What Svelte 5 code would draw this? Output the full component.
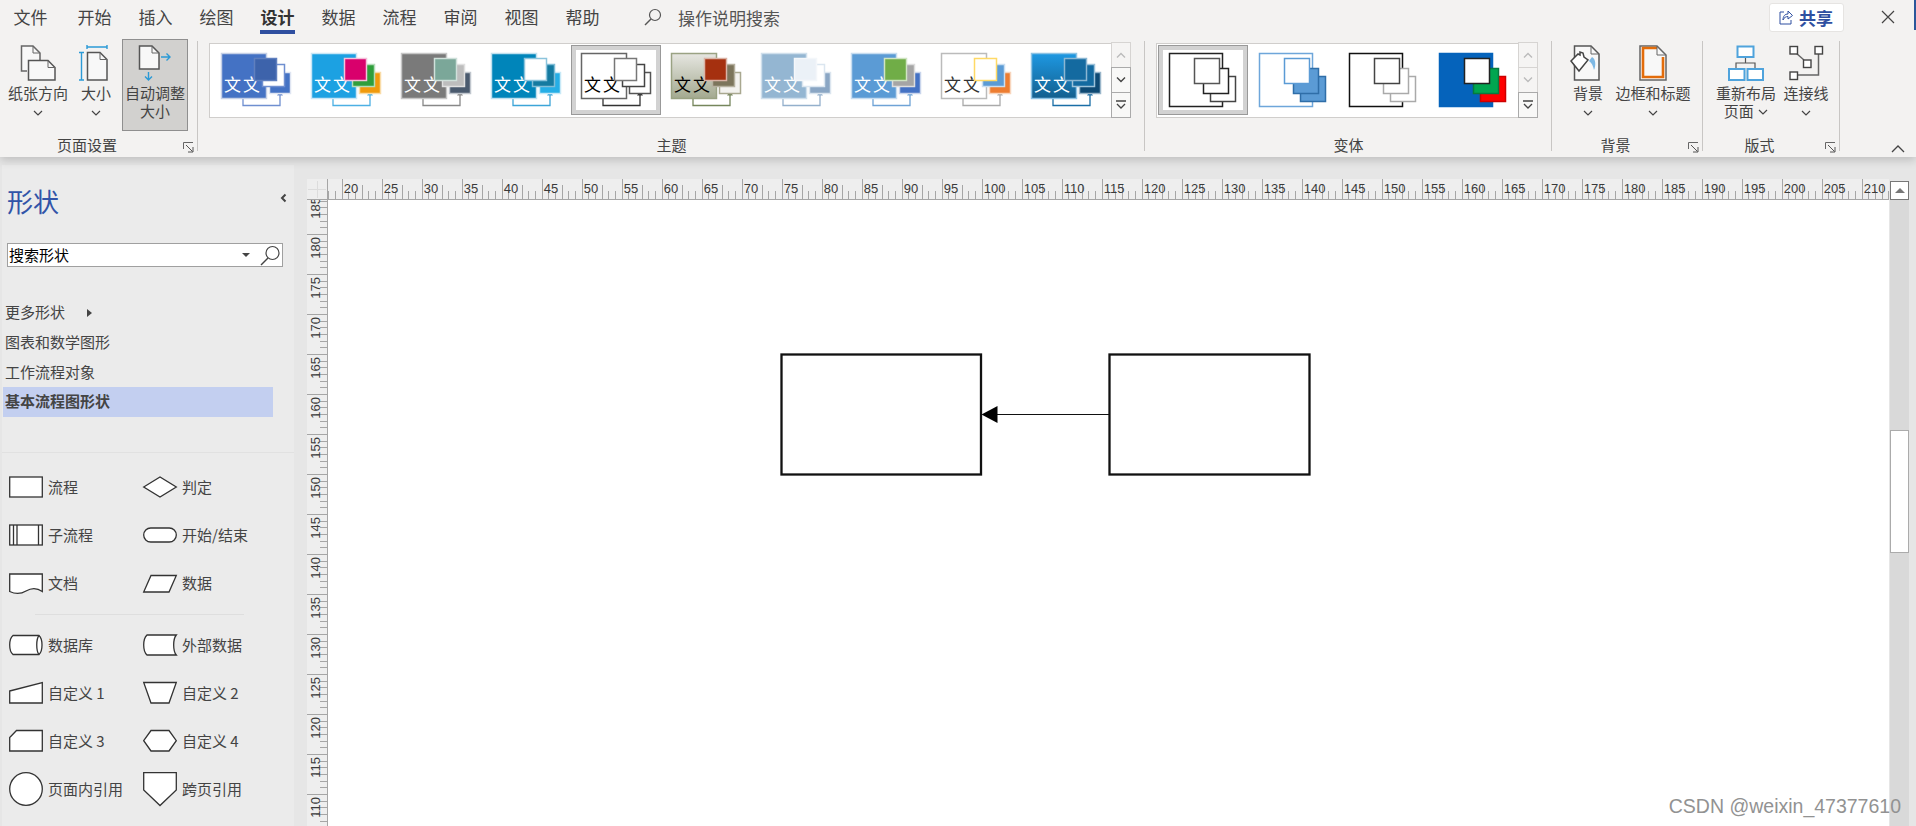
<script>
  const tabs = ['文件', '开始', '插入', '绘图', '设计', '数据', '流程', '审阅', '视图', '帮助'];

  const themes = [
    { main: ['#4472c4', '#c5d0e6'], back: ['#4472c4', '#dfe5f2'], mid: ['#fff', '#6f8fd0'], front: ['#3d63ab', '#5f7fbe'], conn: '#6f8fd0', text: '#fff' },
    { main: ['#1ca1e2', '#c8e6f6'], back: ['#f09a0d', '#f9dca8'], mid: ['#2f9e3c', '#b5dcba'], front: ['#d9006c', '#f4c0da'], conn: '#4cb0e4', text: '#fff' },
    { main: ['#7a7a7a', '#c6c6c6'], back: ['#4a5a6e', '#c0c6cd'], mid: ['#bdbdbd', '#e0e0e0'], front: ['#7ba799', '#cfe0da'], conn: '#888', text: '#fff' },
    { main: ['#0085ba', '#c0e0ee'], back: ['#25aee6', '#c8e9f7'], mid: ['#147aa0', '#7fbdd6'], front: ['#fff', '#8cc4dc'], conn: '#3ca5d8', text: '#fff' },
    { main: ['#fff', '#666'], back: ['#fff', '#555'], mid: ['#fff', '#444'], front: ['#fff', '#777'], conn: '#333', text: '#000' },
    { main: ['url(#sage)', '#9aa283'], back: ['#f3f2ef', '#a9a890'], mid: ['#7c755c', '#b5b09f'], front: ['#a5300f', '#d9b3a6'], conn: '#76865c', text: '#000' },
    { main: ['#94b6d2', '#cfdfec'], back: ['#8aa6c4', '#dbe5ef'], mid: ['#fff', '#dbe6f0'], front: ['#ebf1f7', '#f4f7fa'], conn: '#94b0cc', text: '#fff' },
    { main: ['#5b9bd5', '#c6dcf0'], back: ['#4472c4', '#c9d5ec'], mid: ['#a5a5a5', '#ddd'], front: ['#70ad47', '#cfe4c2'], conn: '#6fa3d6', text: '#fff' },
    { main: ['#fff', '#bbb'], back: ['#ed7d31', '#f8d5bd'], mid: ['#5b9bd5', '#c9def1'], front: ['#fff', '#ffd966'], conn: '#aaa', text: '#333' },
    { main: ['url(#ocean)', '#8cc2e4'], back: ['#0f4a74', '#9ab6ca'], mid: ['#146aa0', '#9cc1d9'], front: ['#146aa0', '#8bb6d2'], conn: '#1a6ea6', text: '#fff' }
  ];

  const variants = [
    { main: ['#fff', '#222'], back: ['#fff', '#444'], mid: ['#fff', '#222'], front: ['#fff', '#555'] },
    { main: ['#fff', '#6ea6da'], back: ['#5b9bd5', '#2f6ea8'], mid: ['#5b9bd5', '#2f6ea8'], front: ['#fff', '#5b9bd5'] },
    { main: ['#fff', '#111'], back: ['#fff', '#aaa'], mid: ['#fff', '#aaa'], front: ['#fff', '#444'] },
    { main: ['#0563bb', '#0563bb'], back: ['#ff0000', '#c00'], mid: ['#00a650', '#067a3e'], front: ['#fff', '#222'] }
  ];

  const menu = ['图表和数学图形', '工作流程对象'];

  const topTicks = [];
  for (let k = -2; k <= 233; k++) {
    const m = ((k % 6) + 6) % 6;
    topTicks.push({ x: Math.round(13.7 + (k * 40) / 6) + 0.5, len: m === 0 ? 20 : m === 3 ? 14 : 8 });
  }
  const topLabels = [];
  for (let v = 20; v <= 210; v += 5) topLabels.push({ v, x: 13.7 + (v - 20) * 8 + 2 });

  const sideTicks = [];
  for (let k = -6; k <= 95; k++) {
    const m = ((k % 6) + 6) % 6;
    sideTicks.push({ y: Math.round(34 + (k * 40) / 6) + 0.5, len: m === 0 ? 21 : m === 3 ? 12 : 8 });
  }
  const sideLabels = [];
  for (let v = 185; v >= 110; v -= 5) sideLabels.push({ v, y: 34 + (180 - v) * 8 + 3 });
</script>

{#snippet chevron()}
  <svg class="chev" width="10" height="6" viewBox="0 0 10 6"><path d="M1 1l4 4 4-4" fill="none" stroke="#444" stroke-width="1.2" /></svg>
{/snippet}

{#snippet launcher()}
  <svg class="launcher" width="11" height="11" viewBox="0 0 11 11">
    <path d="M.5 7V.5H10" fill="none" stroke="#666" />
    <path d="M3 3l6.5 6.5M10 5v5H5" fill="none" stroke="#555" />
  </svg>
{/snippet}

{#snippet stack(t, box, text)}
  <rect x={box.main[0]} y={box.main[1]} width={box.main[2]} height={box.main[2]} fill={t.main[0]} stroke={t.main[1]} stroke-width="1.5" />
  <rect x={box.back[0]} y={box.back[1]} width={box.back[2]} height={box.back[2]} fill={t.back[0]} stroke={t.back[1]} stroke-width="1.5" />
  <rect x={box.mid[0]} y={box.mid[1]} width={box.mid[2]} height={box.mid[2]} fill={t.mid[0]} stroke={t.mid[1]} stroke-width="1.5" />
  {#if text}
    <text x="13" y="46" class="thumb-text" fill={t.text}>文文</text>
  {/if}
  <rect x={box.front[0]} y={box.front[1]} width={box.front[2]} height={box.front[2]} fill={t.front[0]} stroke={t.front[1]} stroke-width="1.5" />
{/snippet}

<div class="app">
  <header class="ribbon">
    <nav class="tabs">
      {#each tabs as tab}
        <span class="tab" class:active={tab === '设计'}>{tab}</span>
      {/each}
      <svg class="tell-icon" width="18" height="18" viewBox="0 0 18 18">
        <circle cx="11" cy="7" r="5.5" fill="none" stroke="#555" stroke-width="1.2" />
        <path d="M7 11l-6 6" stroke="#555" stroke-width="1.4" />
      </svg>
      <span class="tell">操作说明搜索</span>
      <div class="share">
        <svg width="14" height="16" viewBox="0 0 14 16">
          <path d="M5 3H1v12h11v-4" fill="none" stroke="#2f4fa0" />
          <path d="M4 11c0-4 2-6 5-6V2l4.500 4.500L9 10V7.500c-2 0-4 1-5 3.500z" fill="none" stroke="#2f4fa0" />
        </svg>
        <b>共享</b>
      </div>
      <svg class="close" width="14" height="14" viewBox="0 0 14 14"><path d="M1 1l12 12M13 1L1 13" stroke="#444" stroke-width="1.2" /></svg>
      <span class="edge"></span>
    </nav>

    <div class="groups">
      <section class="group launched" style="width:198px">
        <div class="body">
          <div class="btn" style="width:76px">
            <svg class="icon" width="36" height="36" viewBox="0 0 36 36">
              <path d="M7 26H1.500V1H13l7 7v7" fill="#f8f8f8" stroke="#666" stroke-width="1.500" />
              <path d="M8.500 15.500H28l7 7V35H8.500z" fill="#f8f8f8" stroke="#555" stroke-width="1.500" />
              <path d="M13 1v7h7M28 15.500v7h7" fill="none" stroke="#666" />
            </svg>
            <span>纸张方向</span>
            {@render chevron()}
          </div>
          <div class="btn" style="width:40px">
            <svg class="icon" width="36" height="36" viewBox="0 0 36 36">
              <path d="M9.500 7.500H22l7 7V35H9.500z" fill="#f8f8f8" stroke="#555" stroke-width="1.500" />
              <path d="M22 7.500v7h7" fill="none" stroke="#666" />
              <path d="M9 2h20M9 0v4M29 0v4M3.500 7.500V35M1 7.500h5M1 35h5" fill="none" stroke="#2b9ad6" stroke-width="1.400" />
            </svg>
            <span>大小</span>
            {@render chevron()}
          </div>
          <div class="btn pressed">
            <svg class="icon" width="36" height="36" viewBox="0 0 36 36">
              <path d="M2.500 1H15l7 7v16H2.500z" fill="#f8f8f8" stroke="#555" stroke-width="1.500" />
              <path d="M15 1v7h7" fill="none" stroke="#666" />
              <path d="M24 12h9M29.500 8.500L33 12l-3.500 3.500M11.500 27v8M8 31.500l3.500 3.500 3.500-3.500" fill="none" stroke="#2b9ad6" stroke-width="1.400" />
            </svg>
            <span>自动调整</span>
            <span>大小</span>
          </div>
        </div>
        <div class="label">页面设置</div>
        {@render launcher()}
      </section>

      <section class="group" style="width:947px">
        <div class="body">
          <div class="gallery" style="width:922px">
            {#each themes as t, i}
              <div class="cell" class:selected={i === 4}>
                <svg width="88" height="68" viewBox="1 1 88 68">
                  <defs>
                    <linearGradient id="sage" x1="0" y1="0" x2="0" y2="1"><stop offset="0" stop-color="#e6e6e1" /><stop offset="1" stop-color="#a3a98f" /></linearGradient>
                    <linearGradient id="ocean" x1="0" y1="0" x2="0" y2="1"><stop offset="0" stop-color="#1e98e2" /><stop offset="1" stop-color="#135f8e" /></linearGradient>
                  </defs>
                  <path d="M32 54v6.500h37V50" fill="none" stroke={t.conn} stroke-width="1.300" />
                  <path d="M69 46l3 4.500h-6z" fill={t.conn} />
                  {@render stack(t, { main: [10.5, 8.5, 45], front: [43.5, 13.5, 22], mid: [51.5, 19.5, 22], back: [58.5, 27.5, 21] }, true)}
                </svg>
              </div>
            {/each}
            <div class="spin">
              <div class="off"><svg width="12" height="8" viewBox="0 0 12 8"><path d="M2 6.500l4-4 4 4" fill="none" stroke="#bbb" stroke-width="1.400" /></svg></div>
              <div><svg width="12" height="8" viewBox="0 0 12 8"><path d="M2 1.500l4 4 4-4" fill="none" stroke="#444" stroke-width="1.400" /></svg></div>
              <div><svg width="12" height="10" viewBox="0 0 12 10"><path d="M1 1h10M2 4l4 4 4-4" fill="none" stroke="#444" stroke-width="1.300" /></svg></div>
            </div>
          </div>
        </div>
        <div class="label">主题</div>
      </section>

      <section class="group" style="width:407px">
        <div class="body">
          <div class="gallery" style="width:381px">
            {#each variants as t, i}
              <div class="cell" class:selected={i === 0}>
                <svg width="88" height="68" viewBox="1 1 88 68">
                  {@render stack(t, { main: [11.5, 8.5, 53], front: [36.5, 13.5, 25], mid: [45.5, 23.5, 25], back: [52.5, 31.5, 25] }, false)}
                </svg>
              </div>
            {/each}
            <div class="spin">
              <div class="off"><svg width="12" height="8" viewBox="0 0 12 8"><path d="M2 6.500l4-4 4 4" fill="none" stroke="#bbb" stroke-width="1.400" /></svg></div>
              <div class="off"><svg width="12" height="8" viewBox="0 0 12 8"><path d="M2 1.500l4 4 4-4" fill="none" stroke="#bbb" stroke-width="1.400" /></svg></div>
              <div><svg width="12" height="10" viewBox="0 0 12 10"><path d="M1 1h10M2 4l4 4 4-4" fill="none" stroke="#444" stroke-width="1.300" /></svg></div>
            </div>
          </div>
        </div>
        <div class="label">变体</div>
      </section>

      <section class="group launched" style="width:151px">
        <div class="body inset-bg">
          <div class="btn" style="width:50px">
            <svg class="icon" width="36" height="36" viewBox="0 0 36 36">
              <path d="M4.500 1H21l8 8v26H4.500z" fill="#f8f8f8" stroke="#555" stroke-width="1.500" />
              <path d="M21 1v8h8" fill="none" stroke="#666" />
              <path d="M22 12c4 2 4 9 2 13-1-4-2-7-5-9z" fill="#7db8e4" />
              <path d="M1 16l7-7 2 1 0-3 3 1 1 4 4 3-9 11z" fill="#fff" stroke="#444" stroke-width="1.500" />
            </svg>
            <span>背景</span>
            {@render chevron()}
          </div>
          <div class="btn" style="width:80px">
            <svg class="icon" width="36" height="36" viewBox="0 0 36 36">
              <path d="M5 1h17l9 9v25H5z" fill="#f8f8f8" stroke="#666" stroke-width="1.500" />
              <path d="M22 3H8v29h20V12" fill="none" stroke="#e36c0a" stroke-width="2.600" />
              <path d="M22 1v9h9" fill="none" stroke="#666" />
            </svg>
            <span>边框和标题</span>
            {@render chevron()}
          </div>
        </div>
        <div class="label">背景</div>
        {@render launcher()}
      </section>

      <section class="group launched" style="width:137px">
        <div class="body layout-body">
          <div class="btn" style="width:60px">
            <svg class="icon" width="36" height="36" viewBox="0 0 36 36">
              <path d="M17.500 12v6M8 24v-6h19v6" fill="none" stroke="#555" stroke-width="1.200" />
              <rect x="9.500" y="1.500" width="16" height="10.500" fill="#fff" stroke="#4fa3dc" stroke-width="2" />
              <rect x="1" y="24" width="15.500" height="11" fill="#fff" stroke="#4fa3dc" stroke-width="2" />
              <rect x="19.500" y="24" width="15.500" height="11" fill="#fff" stroke="#4fa3dc" stroke-width="2" />
            </svg>
            <span>重新布局</span>
            <span class="with-chev">页面 {@render chevron()}</span>
          </div>
          <div class="btn" style="width:60px">
            <svg class="icon" width="36" height="36" viewBox="0 0 36 36">
              <path d="M8 8l8 7M30.500 9v21H9" fill="none" stroke="#666" stroke-width="1.500" />
              <rect x="2" y="1.500" width="7.500" height="7.500" fill="#fff" stroke="#444" stroke-width="1.400" />
              <rect x="15.500" y="15" width="7.500" height="7.500" fill="#fff" stroke="#444" stroke-width="1.400" />
              <rect x="27" y="1.500" width="7.500" height="7.500" fill="#fff" stroke="#444" stroke-width="1.400" />
              <rect x="2" y="27" width="7.500" height="7.500" fill="#fff" stroke="#444" stroke-width="1.400" />
            </svg>
            <span>连接线</span>
            {@render chevron()}
          </div>
        </div>
        <div class="label">版式</div>
        {@render launcher()}
      </section>

      <svg class="collapse" width="14" height="8" viewBox="0 0 14 8"><path d="M1 7l6-6 6 6" fill="none" stroke="#444" stroke-width="1.300" /></svg>
    </div>
  </header>

  <div class="workspace">
    <aside class="panel">
      <div class="panel-head">
        <h1>形状</h1>
        <svg width="7" height="10" viewBox="0 0 7 10"><path d="M5.500 1.500L2 5l3.500 3.500" fill="none" stroke="#444" stroke-width="2" /></svg>
      </div>
      <div class="search">
        <span>搜索形状</span>
        <i class="tri"></i>
        <svg width="21" height="21" viewBox="0 0 21 21">
          <circle cx="12.500" cy="8" r="6.500" fill="none" stroke="#444" stroke-width="1.200" />
          <path d="M8 13l-7 7" stroke="#444" stroke-width="1.400" />
        </svg>
      </div>
      <ul class="menu">
        <li>更多形状<i class="more"></i></li>
        {#each menu as item}
          <li>{item}</li>
        {/each}
        <li class="current">基本流程图形状</li>
      </ul>
      <div class="rule"></div>
      <div class="shapes">
        <div class="shape"><svg viewBox="0 0 34 40"><rect x=".7" y="10" width="32.600" height="20" /></svg>流程</div>
        <div class="shape"><svg viewBox="0 0 34 40"><path d="M.7 20L17 10l16.300 10L17 30z" /></svg>判定</div>
        <div class="shape"><svg viewBox="0 0 34 40"><rect x=".7" y="10" width="32.600" height="20" /><path d="M4.500 10v20M8 10v20M29.500 10v20" /></svg>子流程</div>
        <div class="shape"><svg viewBox="0 0 34 40"><rect x=".7" y="13" width="32.600" height="14" rx="7" /></svg>开始/结束</div>
        <div class="shape"><svg viewBox="0 0 34 40"><path d="M.7 11h32.600v17.500C27 24 22 25 17 28s-11 3-16.300.5z" /></svg>文档</div>
        <div class="shape"><svg viewBox="0 0 34 40"><path d="M.7 29L8 12.500h25.300L26 29z" /></svg>数据</div>
        <div class="divider"></div>
        <div class="shape"><svg viewBox="0 0 34 40"><path d="M4 10.500h26c4 3.500 4 15.500 0 19H4c-4.400-3.500-4.400-15.500 0-19z" /><path d="M30 10.500c-3 3.500-3 15.500 0 19" /></svg>数据库</div>
        <div class="shape"><svg viewBox="0 0 34 40"><path d="M4 10h29.300c-3.500 4-3.500 16 0 20H4C-.4 26-.4 14 4 10z" /></svg>外部数据</div>
        <div class="shape"><svg viewBox="0 0 34 40"><path d="M.7 18L33.300 9.500V30H.7z" /></svg>自定义 1</div>
        <div class="shape"><svg viewBox="0 0 34 40"><path d="M.7 9.500h32.600L26 30H8z" /></svg>自定义 2</div>
        <div class="shape"><svg viewBox="0 0 34 40"><path d="M7.500 9.500h25.800V30H.7V16.500z" /></svg>自定义 3</div>
        <div class="shape"><svg viewBox="0 0 34 40"><path d="M.7 19.700L8 9.500h18l7.300 10.200L26 30H8z" /></svg>自定义 4</div>
        <div class="shape"><svg viewBox="0 0 34 40"><circle cx="17" cy="20" r="16.300" /></svg>页面内引用</div>
        <div class="shape"><svg viewBox="0 0 34 40"><path d="M.7 3.700h32.600V21L17 36.500.7 21z" /></svg>跨页引用</div>
      </div>
    </aside>

    <main class="drawing">
      <svg class="corner" width="21" height="21" viewBox="0 0 21 21">
        <path d="M10.500 2v17M1 10.500h18" stroke="#dcdcdc" />
        <path d="M20.500 0v21M0 20.500h21" stroke="#a6a6a6" />
      </svg>
      <svg class="ruler-top" width="1561" height="21" viewBox="0 0 1561 21">
        {#each topTicks as t}
          <path d="M{t.x} {20 - t.len}v{t.len}" stroke="#a6a6a6" />
        {/each}
        <path d="M0 20.500h1561" stroke="#a6a6a6" />
        {#each topLabels as l}
          <text class="ruler-text" x={l.x} y="13.500">{l.v}</text>
        {/each}
      </svg>
      <div class="scroll-btn"><i></i></div>

      <svg class="ruler-side" width="21" height="626" viewBox="0 0 21 626">
        {#each sideTicks as t}
          <path d="M{21 - t.len} {t.y}h{t.len}" stroke="#a6a6a6" />
        {/each}
        <path d="M20.500 0v626" stroke="#a6a6a6" />
        {#each sideLabels as l}
          <text class="ruler-text" text-anchor="end" x="12.500" y={l.y} transform="rotate(-90 12.500 {l.y})">{l.v}</text>
        {/each}
      </svg>
      <svg class="canvas" width="1561" height="626" viewBox="0 0 1561 626">
        <rect x="453.500" y="154.500" width="199.500" height="120" fill="#fff" stroke="#111" stroke-width="2.300" />
        <rect x="781.500" y="154.500" width="200" height="120" fill="#fff" stroke="#111" stroke-width="2.300" />
        <path d="M669 214.500h112" stroke="#111" stroke-width="1.200" />
        <path d="M653.500 214.500l16-8.500v17z" fill="#000" />
      </svg>
      <div class="track"><div class="thumb"></div></div>
    </main>
  </div>
  <div class="mark">CSDN @weixin_47377610</div>
</div>

<style>
  :global(body) {
    margin: 0;
    background: #e6e6e6;
  }

  .app {
    position: relative;
    width: 1916px;
    height: 826px;
    overflow: hidden;
    background: #e6e6e6;
    color: #444;
    font-family: "Noto Sans CJK SC", "Noto Sans", sans-serif;
    font-size: 15px;
  }

  .ribbon {
    position: relative;
    z-index: 2;
    height: 157px;
    background: #f3f2f1;
    box-shadow: 0 3px 9px rgba(0, 0, 0, 0.18);
  }

  .tabs {
    display: flex;
    align-items: center;
    box-sizing: border-box;
    height: 38px;
    padding-bottom: 4px;
  }
  .tab {
    position: relative;
    width: 61px;
    text-align: center;
    font-size: 17px;
    line-height: 34px;
    color: #444;
  }
  .tab:first-child {
    width: 64px;
    padding-right: 3px;
    box-sizing: border-box;
  }
  .tab.active {
    font-weight: 700;
    color: #333;
  }
  .tab.active::after {
    content: "";
    position: absolute;
    left: 13px;
    width: 35px;
    top: 30px;
    height: 4px;
    background: #2f4fa0;
  }
  .tell-icon {
    margin-left: 31px;
    margin-right: 16px;
  }
  .tell {
    font-size: 17px;
    color: #555;
  }
  .share {
    display: flex;
    align-items: center;
    gap: 6px;
    margin-left: auto;
    box-sizing: border-box;
    width: 75px;
    height: 29px;
    padding-left: 9px;
    background: #fff;
    border: 1px solid #e6e4e2;
    border-radius: 3px;
    color: #2f4fa0;
    font-size: 17px;
  }
  .close {
    margin-left: 37px;
  }
  .edge {
    align-self: flex-start;
    width: 2px;
    height: 30px;
    margin-left: 19px;
    background: #2b579a;
  }

  .groups {
    display: flex;
    align-items: flex-start;
  }
  .group {
    position: relative;
    flex: none;
    height: 118px;
    margin-top: 1px;
    box-sizing: border-box;
  }
  .group::after {
    content: "";
    position: absolute;
    right: 0;
    top: 2px;
    bottom: 6px;
    width: 1px;
    background: #c8c6c4;
  }
  .body {
    display: flex;
    height: 94px;
    flex: none;
  }
  .label {
    height: 24px;
    line-height: 24px;
    text-align: center;
    white-space: nowrap;
  }
  .launched .label {
    padding-right: 24px;
  }
  .launcher {
    position: absolute;
    right: 4px;
    top: 103px;
  }
  .inset-bg {
    padding-left: 11px;
  }
  .layout-body {
    padding-left: 13px;
  }

  .btn {
    display: flex;
    flex-direction: column;
    align-items: center;
    flex: none;
    padding-top: 6px;
    white-space: nowrap;
    line-height: 18px;
  }
  .btn .icon {
    flex: none;
    margin-bottom: 3px;
  }
  .chev {
    margin-top: 8px;
  }
  .with-chev .chev {
    margin: 0 0 2px 1px;
  }
  .btn.pressed {
    box-sizing: border-box;
    width: 66px;
    height: 92px;
    margin-left: 6px;
    padding-top: 5px;
    background: #d2d1cf;
    border: 1px solid #8f8f8f;
  }

  .gallery {
    display: flex;
    box-sizing: border-box;
    height: 75px;
    margin: 4px 0 0 11px;
    padding: 1px;
    background: #fff;
    border: 1px solid #d0cecc;
  }
  .cell {
    flex: none;
    box-sizing: border-box;
    width: 90px;
    height: 70px;
    padding: 1px;
  }
  .cell svg {
    display: block;
  }
  .cell.selected {
    background: #fff;
    outline: 1px solid #999;
    outline-offset: -1px;
    box-shadow: inset 0 0 0 5px #d2d2d2;
  }
  .thumb-text {
    font-size: 17px;
    letter-spacing: 2px;
  }
  .spin {
    display: flex;
    flex-direction: column;
    flex: none;
    width: 20px;
    margin: -2px -2px -2px auto;
  }
  .spin div {
    display: flex;
    align-items: center;
    justify-content: center;
    flex: 1;
    background: #f8f8f7;
    border: 1px solid #aaa;
    margin-top: -1px;
  }
  .spin div.off {
    background: #f5f4f3;
    border-color: #d6d4d2;
  }
  .collapse {
    margin: 107px 0 0 51px;
  }

  .workspace {
    display: flex;
    height: 669px;
  }

  .panel {
    flex: none;
    width: 292px;
    margin: 8px 13px 0 2px;
    background: #ebebeb;
  }
  .panel-head {
    display: flex;
    align-items: center;
    justify-content: space-between;
    padding: 18px 7px 0 5px;
  }
  .panel-head svg {
    margin-top: -6px;
  }
  h1 {
    margin: 0;
    font-size: 26px;
    line-height: 36px;
    font-weight: 400;
    color: #3254a8;
  }
  .search {
    display: flex;
    align-items: center;
    box-sizing: border-box;
    width: 276px;
    height: 24px;
    margin: 24px 0 0 5px;
    padding-left: 1px;
    background: #fff;
    border: 1px solid #a0a0a0;
    color: #000;
  }
  .search span {
    line-height: 19px;
    padding-bottom: 2px;
  }
  .tri {
    margin-left: auto;
    border: 4px solid transparent;
    border-top: 4px solid #444;
    border-bottom: 0;
  }
  .search svg {
    margin: 0 1px 0 10px;
  }
  .menu {
    list-style: none;
    margin: 31px 0 0;
    padding: 0;
  }
  .menu li {
    width: 268px;
    margin-left: 1px;
    padding-left: 2px;
    line-height: 28px;
    height: 30px;
  }
  .menu li.current {
    margin-top: -1px;
    background: #c3cff0;
    font-weight: 700;
  }
  .more {
    display: inline-block;
    margin-left: 22px;
    vertical-align: 1px;
    border: 4px solid transparent;
    border-left: 5px solid #444;
    border-right: 0;
  }
  .rule {
    height: 1px;
    margin-top: 35px;
    background: #e1e1e1;
  }
  .shapes {
    display: grid;
    grid-template-columns: 134px 1fr;
    grid-template-rows: repeat(3, 48px) 14px repeat(4, 48px);
    padding: 10px 0 0 7px;
  }
  .shape {
    display: flex;
    align-items: center;
    gap: 5px;
    box-sizing: border-box;
    padding-bottom: 2px;
    white-space: nowrap;
  }
  .shape svg {
    flex: none;
    width: 34px;
    height: 40px;
    margin-top: 2px;
    overflow: visible;
  }
  .shape svg :global(*) {
    fill: #fff;
    stroke: #333;
    stroke-width: 1.3;
  }
  .divider {
    grid-column: 1 / -1;
    height: 1px;
    margin: 7px 0 0 26px;
    width: 209px;
    background: #dedede;
  }

  .drawing {
    display: grid;
    grid-template-columns: 21px 1561px 20px;
    grid-template-rows: 21px 626px;
    margin-top: 22px;
    align-self: flex-start;
  }
  .drawing svg {
    display: block;
  }
  .corner,
  .ruler-top,
  .ruler-side {
    background: #eeeeee;
  }
  .ruler-text {
    font-family: "Liberation Sans", sans-serif;
    font-size: 13px;
    fill: #3a3a3a;
  }
  .canvas {
    background: #fff;
  }
  .scroll-btn {
    display: flex;
    align-items: center;
    justify-content: center;
    box-sizing: border-box;
    width: 19px;
    height: 19px;
    margin: 2px 0 0 1px;
    background: #fff;
    border: 1px solid #777;
  }
  .scroll-btn i {
    border: 5px solid transparent;
    border-bottom: 5px solid #777;
    border-top: 0;
  }
  .track {
    width: 19px;
    margin-left: 1px;
    background: #d9d9d9;
    padding-top: 230px;
  }
  .thumb {
    box-sizing: border-box;
    height: 123px;
    background: #fff;
    border: 1px solid #ababab;
  }

  .mark {
    position: absolute;
    right: 15px;
    bottom: 8px;
    font-family: "Liberation Sans", sans-serif;
    font-size: 19.500px;
    color: #929292;
  }
</style>
